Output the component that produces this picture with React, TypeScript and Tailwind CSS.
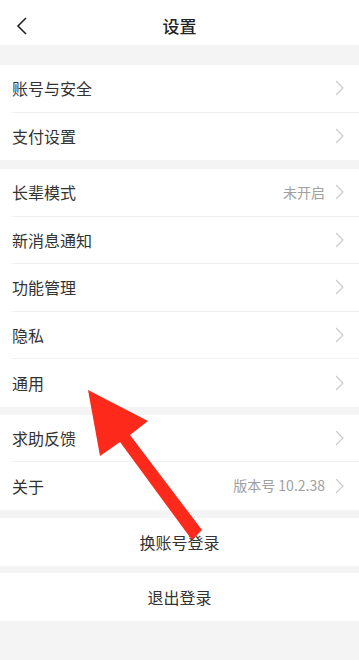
type Row = { label: string; value?: string };

const sections: Row[][] = [
  [{ label: "账号与安全" }, { label: "支付设置" }],
  [
    { label: "长辈模式", value: "未开启" },
    { label: "新消息通知" },
    { label: "功能管理" },
    { label: "隐私" },
    { label: "通用" },
  ],
  [{ label: "求助反馈" }, { label: "关于", value: "版本号 10.2.38" }],
];

const gaps = ["h-[9px]", "h-[8px]", "h-[8px]"];

function Chevron() {
  return (
    <svg width="9" height="16" viewBox="0 0 9 16" fill="none" className="shrink-0">
      <path d="M1 1l7 7-7 7" stroke="#cccccc" strokeWidth="1.2" />
    </svg>
  );
}

function SettingRow({ row, last }: { row: Row; last: boolean }) {
  return (
    <div className="pl-3">
      <div
        className={`flex h-[47.5px] items-center justify-between pr-[15px] ${
          last ? "" : "border-b border-[#f0f0f0]"
        }`}
      >
        <span className="text-[16px] text-[#333]">{row.label}</span>
        <div className="flex items-center gap-[10px]">
          {row.value ? <span className="text-[14px] text-[#a0a0a0]">{row.value}</span> : null}
          <Chevron />
        </div>
      </div>
    </div>
  );
}

export default function App() {
  return (
    <div
      className="relative min-h-[660px] w-[359px] overflow-hidden bg-[#f4f4f4]"
      style={{ fontFamily: '"Noto Sans CJK SC", "Noto Sans", sans-serif' }}
    >
      {/* header */}
      <header className="relative flex h-[45px] items-center justify-center bg-white pt-[6px]">
        <svg
          width="12"
          height="18"
          viewBox="0 0 12 18"
          fill="none"
          className="absolute left-[16px] top-[17px]"
        >
          <path d="M10 1L2 9l8 8" stroke="#222" strokeWidth="1.6" />
        </svg>
        <h1 className="text-[17px] font-medium text-[#222]">设置</h1>
      </header>

      <div className="h-[20px]" />

      {sections.map((rows, i) => (
        <div key={i}>
          <div className="bg-white">
            {rows.map((row, j) => (
              <SettingRow key={row.label} row={row} last={j === rows.length - 1} />
            ))}
          </div>
          <div className={gaps[i]} />
        </div>
      ))}

      <button className="flex h-[48px] w-full items-center justify-center bg-white text-[16px] text-[#333]">
        换账号登录
      </button>
      <div className="h-[7px]" />
      <button className="flex h-[48px] w-full items-center justify-center bg-white text-[16px] text-[#333]">
        退出登录
      </button>

      {/* annotation arrow */}
      <svg
        width="359"
        height="660"
        viewBox="0 0 359 660"
        className="pointer-events-none absolute left-0 top-0"
      >
        <polygon
          points="88,390 148,421 130,435 202,530 192,540 120,442 100,456"
          fill="#fd2a1c"
        />
      </svg>
    </div>
  );
}
